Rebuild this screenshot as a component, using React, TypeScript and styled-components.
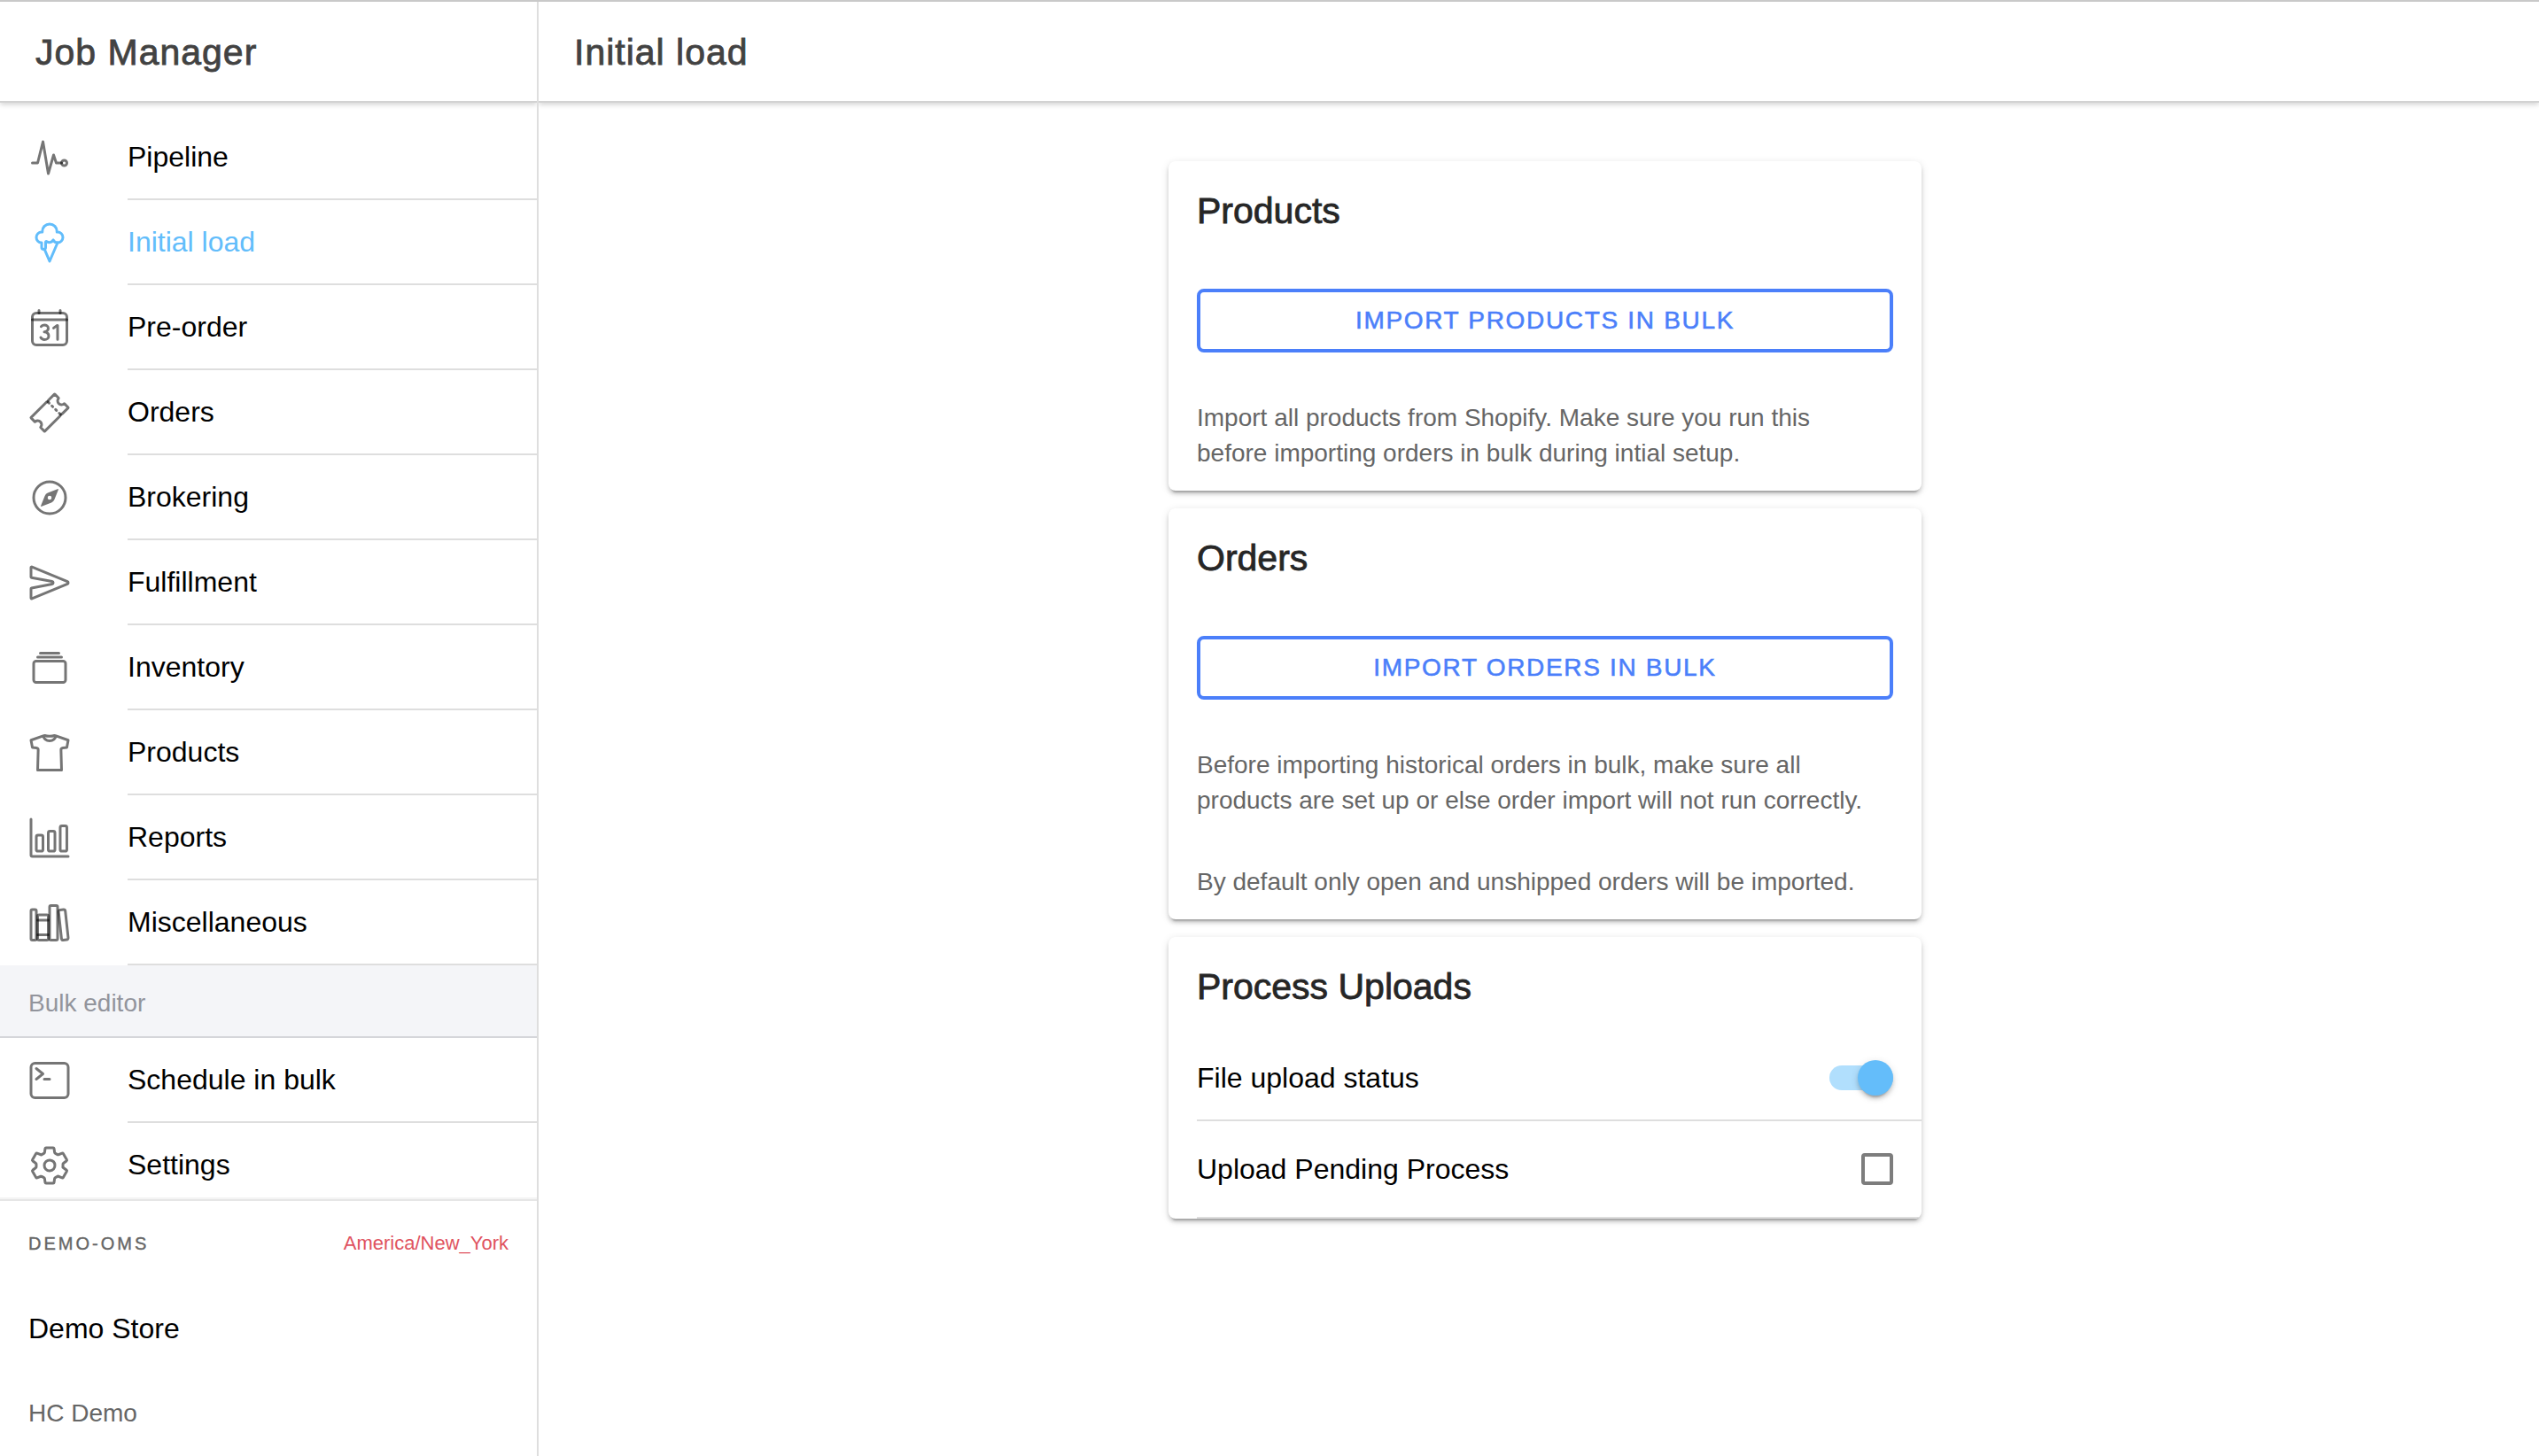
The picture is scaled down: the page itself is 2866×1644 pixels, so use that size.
import React, { useState } from "react";
import styled, { createGlobalStyle } from "styled-components";
import {
  IoPulseOutline,
  IoIceCreamOutline,
  IoCalendarNumberOutline,
  IoTicketOutline,
  IoCompassOutline,
  IoSendOutline,
  IoAlbumsOutline,
  IoShirtOutline,
  IoBarChartOutline,
  IoLibraryOutline,
  IoTerminalOutline,
  IoSettingsOutline,
} from "react-icons/io5";

const GlobalStyle = createGlobalStyle`
  *, *::before, *::after { box-sizing: border-box; }
  body {
    margin: 0;
    background: #fff;
    color: #000;
    font-family: "Liberation Sans", Arial, sans-serif;
    font-size: 32px;
  }
`;

const Page = styled.div`
  display: flex;
  height: 100vh;
  overflow: hidden;
  border-top: 2px solid #c9c9c9;
`;

const Sidebar = styled.aside`
  display: flex;
  flex-direction: column;
  flex: 0 0 608px;
  border-right: 2px solid #dedede;
`;

const Main = styled.main`
  display: flex;
  flex-direction: column;
  flex: 1;
  min-width: 0;
`;

const Toolbar = styled.header`
  position: relative;
  z-index: 1;
  display: flex;
  align-items: center;
  flex: none;
  height: 112px;
  padding: 2px 40px 0;
  background: #fff;
  box-shadow: 0 2px 0 #d2d2d2, 0 4px 6px rgba(0, 0, 0, 0.18);
  clip-path: inset(0 0 -16px 0);
`;

const ToolbarTitle = styled.h1`
  margin: 0;
  color: #424242;
  font-size: 41px;
  font-weight: 500;
  letter-spacing: 1px;
  -webkit-text-stroke: 0.02em currentColor;
`;

const Menu = styled.nav`
  flex: 1;
  min-height: 0;
  overflow: hidden;
  padding-top: 16px;
`;

const MenuLink = styled.a<{ $active?: boolean }>`
  display: flex;
  align-items: center;
  gap: 64px;
  height: 96px;
  padding-left: 32px;
  color: ${(p) => (p.$active ? "#62bdfb" : "#000")};
  text-decoration: none;

  svg {
    flex: none;
    width: 48px;
    height: 48px;
    color: ${(p) => (p.$active ? "#62bdfb" : "rgba(0, 0, 0, 0.54)")};
  }
`;

const MenuLabel = styled.span`
  display: flex;
  align-items: center;
  flex: 1;
  height: 100%;
  border-bottom: 2px solid #dedede;
`;

const MenuDivider = styled.h2`
  display: flex;
  align-items: center;
  height: 82px;
  margin: 0;
  padding: 6px 32px 0;
  border-bottom: 2px solid #d5d6da;
  background: #f4f5f8;
  color: #92949c;
  font-size: 28px;
  font-weight: 400;
`;

const SidebarFooter = styled.footer`
  position: relative;
  flex: none;
  background: #fff;
  box-shadow: 0 -2px 0 #e6e6e6, 0 -4px 0 #f4f4f4;
`;

const FooterRow = styled.div`
  display: flex;
  align-items: center;
  justify-content: space-between;
  height: 96px;
  padding: 0 32px;
`;

const Instance = styled.span`
  color: #666;
  font-size: 20px;
  font-weight: 500;
  letter-spacing: 3px;
  -webkit-text-stroke: 0.02em currentColor;
`;

const TimeZone = styled.span`
  color: #df5260;
  font-size: 22px;
`;

const Shop = styled.span`
  color: #666;
  font-size: 28px;
`;

const Content = styled.div`
  display: flex;
  flex-direction: column;
  align-items: center;
  gap: 20px;
  padding: 68px 0 0 14px;
`;

const Card = styled.section`
  width: 100%;
  max-width: 850px;
  overflow: hidden;
  border-radius: 8px;
  background: #fff;
  box-shadow: 0 6px 2px -4px rgba(0, 0, 0, 0.2), 0 4px 4px rgba(0, 0, 0, 0.14),
    0 2px 10px rgba(0, 0, 0, 0.12);
`;

const CardTitle = styled.h2`
  margin: 0;
  padding: 32px;
  color: #262626;
  font-size: 41px;
  font-weight: 500;
  line-height: 48px;
  -webkit-text-stroke: 0.02em currentColor;
`;

const CardAction = styled.div`
  display: flex;
  padding: 32px 32px 24px;
`;

const OutlineButton = styled.button`
  flex: 1;
  height: 72px;
  padding: 0;
  border: 4px solid #4b7ffa;
  border-radius: 8px;
  background: transparent;
  color: #4b7ffa;
  font-family: inherit;
  font-size: 28px;
  font-weight: 500;
  letter-spacing: 0.06em;
  text-transform: uppercase;
  -webkit-text-stroke: 0.02em currentColor;
`;

const Note = styled.p`
  margin: 0;
  padding: 30px 48px 22px 32px;
  color: #666;
  font-size: 28px;
  line-height: 40px;
`;

const SettingRow = styled.label<{ $tall?: boolean }>`
  display: flex;
  align-items: center;
  justify-content: space-between;
  height: ${(p) => (p.$tall ? 110 : 96)}px;
  margin-left: 32px;
  padding-right: 32px;
  border-bottom: 2px solid #dedede;
`;

const Toggle = styled.input`
  appearance: none;
  display: flex;
  align-items: center;
  width: 72px;
  height: 28px;
  margin: 0;
  border-radius: 14px;
  background: #d3d3d3;

  &::before {
    content: "";
    width: 40px;
    height: 40px;
    flex: none;
    border-radius: 50%;
    background: #fff;
    box-shadow: 0 6px 2px -4px rgba(0, 0, 0, 0.2), 0 4px 4px rgba(0, 0, 0, 0.14),
      0 2px 10px rgba(0, 0, 0, 0.12);
  }

  &:checked {
    justify-content: flex-end;
    background: #b1dffd;
  }

  &:checked::before {
    background: #64bdfa;
  }
`;

const Checkbox = styled.input`
  appearance: none;
  width: 36px;
  height: 36px;
  margin: 0;
  border: 4px solid #7d7d7d;
  border-radius: 4px;

  &:checked {
    border-color: #64bdfa;
    background: #64bdfa;
  }
`;

const jobPages = [
  { label: "Pipeline", Icon: IoPulseOutline },
  { label: "Initial load", Icon: IoIceCreamOutline },
  { label: "Pre-order", Icon: IoCalendarNumberOutline },
  { label: "Orders", Icon: IoTicketOutline },
  { label: "Brokering", Icon: IoCompassOutline },
  { label: "Fulfillment", Icon: IoSendOutline },
  { label: "Inventory", Icon: IoAlbumsOutline },
  { label: "Products", Icon: IoShirtOutline },
  { label: "Reports", Icon: IoBarChartOutline },
  { label: "Miscellaneous", Icon: IoLibraryOutline },
];

const bulkPages = [
  { label: "Schedule in bulk", Icon: IoTerminalOutline },
  { label: "Settings", Icon: IoSettingsOutline },
];

const currentPage = "Initial load";

function MenuItems({ pages }: { pages: typeof jobPages }) {
  return (
    <>
      {pages.map(({ label, Icon }) => (
        <MenuLink key={label} href="#" $active={label === currentPage}>
          <Icon aria-hidden="true" />
          <MenuLabel>{label}</MenuLabel>
        </MenuLink>
      ))}
    </>
  );
}

export default function App() {
  const [uploadEnabled, setUploadEnabled] = useState(true);
  const [pending, setPending] = useState(false);

  return (
    <>
      <GlobalStyle />
      <Page>
        <Sidebar>
          <Toolbar>
            <ToolbarTitle as="div">Job Manager</ToolbarTitle>
          </Toolbar>
          <Menu>
            <MenuItems pages={jobPages} />
            <MenuDivider>Bulk editor</MenuDivider>
            <MenuItems pages={bulkPages} />
          </Menu>
          <SidebarFooter>
            <FooterRow>
              <Instance>DEMO-OMS</Instance>
              <TimeZone>America/New_York</TimeZone>
            </FooterRow>
            <FooterRow>Demo Store</FooterRow>
            <FooterRow>
              <Shop>HC Demo</Shop>
            </FooterRow>
          </SidebarFooter>
        </Sidebar>
        <Main>
          <Toolbar>
            <ToolbarTitle>Initial load</ToolbarTitle>
          </Toolbar>
          <Content>
            <Card>
              <CardTitle>Products</CardTitle>
              <CardAction>
                <OutlineButton type="button">Import products in bulk</OutlineButton>
              </CardAction>
              <Note>
                Import all products from Shopify. Make sure you run this before importing orders in
                bulk during intial setup.
              </Note>
            </Card>
            <Card>
              <CardTitle>Orders</CardTitle>
              <CardAction>
                <OutlineButton type="button">Import orders in bulk</OutlineButton>
              </CardAction>
              <Note>
                Before importing historical orders in bulk, make sure all products are set up or
                else order import will not run correctly.
              </Note>
              <Note>By default only open and unshipped orders will be imported.</Note>
            </Card>
            <Card>
              <CardTitle>Process Uploads</CardTitle>
              <SettingRow>
                File upload status
                <Toggle
                  type="checkbox"
                  role="switch"
                  checked={uploadEnabled}
                  onChange={(e) => setUploadEnabled(e.target.checked)}
                />
              </SettingRow>
              <SettingRow $tall>
                Upload Pending Process
                <Checkbox
                  type="checkbox"
                  checked={pending}
                  onChange={(e) => setPending(e.target.checked)}
                />
              </SettingRow>
            </Card>
          </Content>
        </Main>
      </Page>
    </>
  );
}
